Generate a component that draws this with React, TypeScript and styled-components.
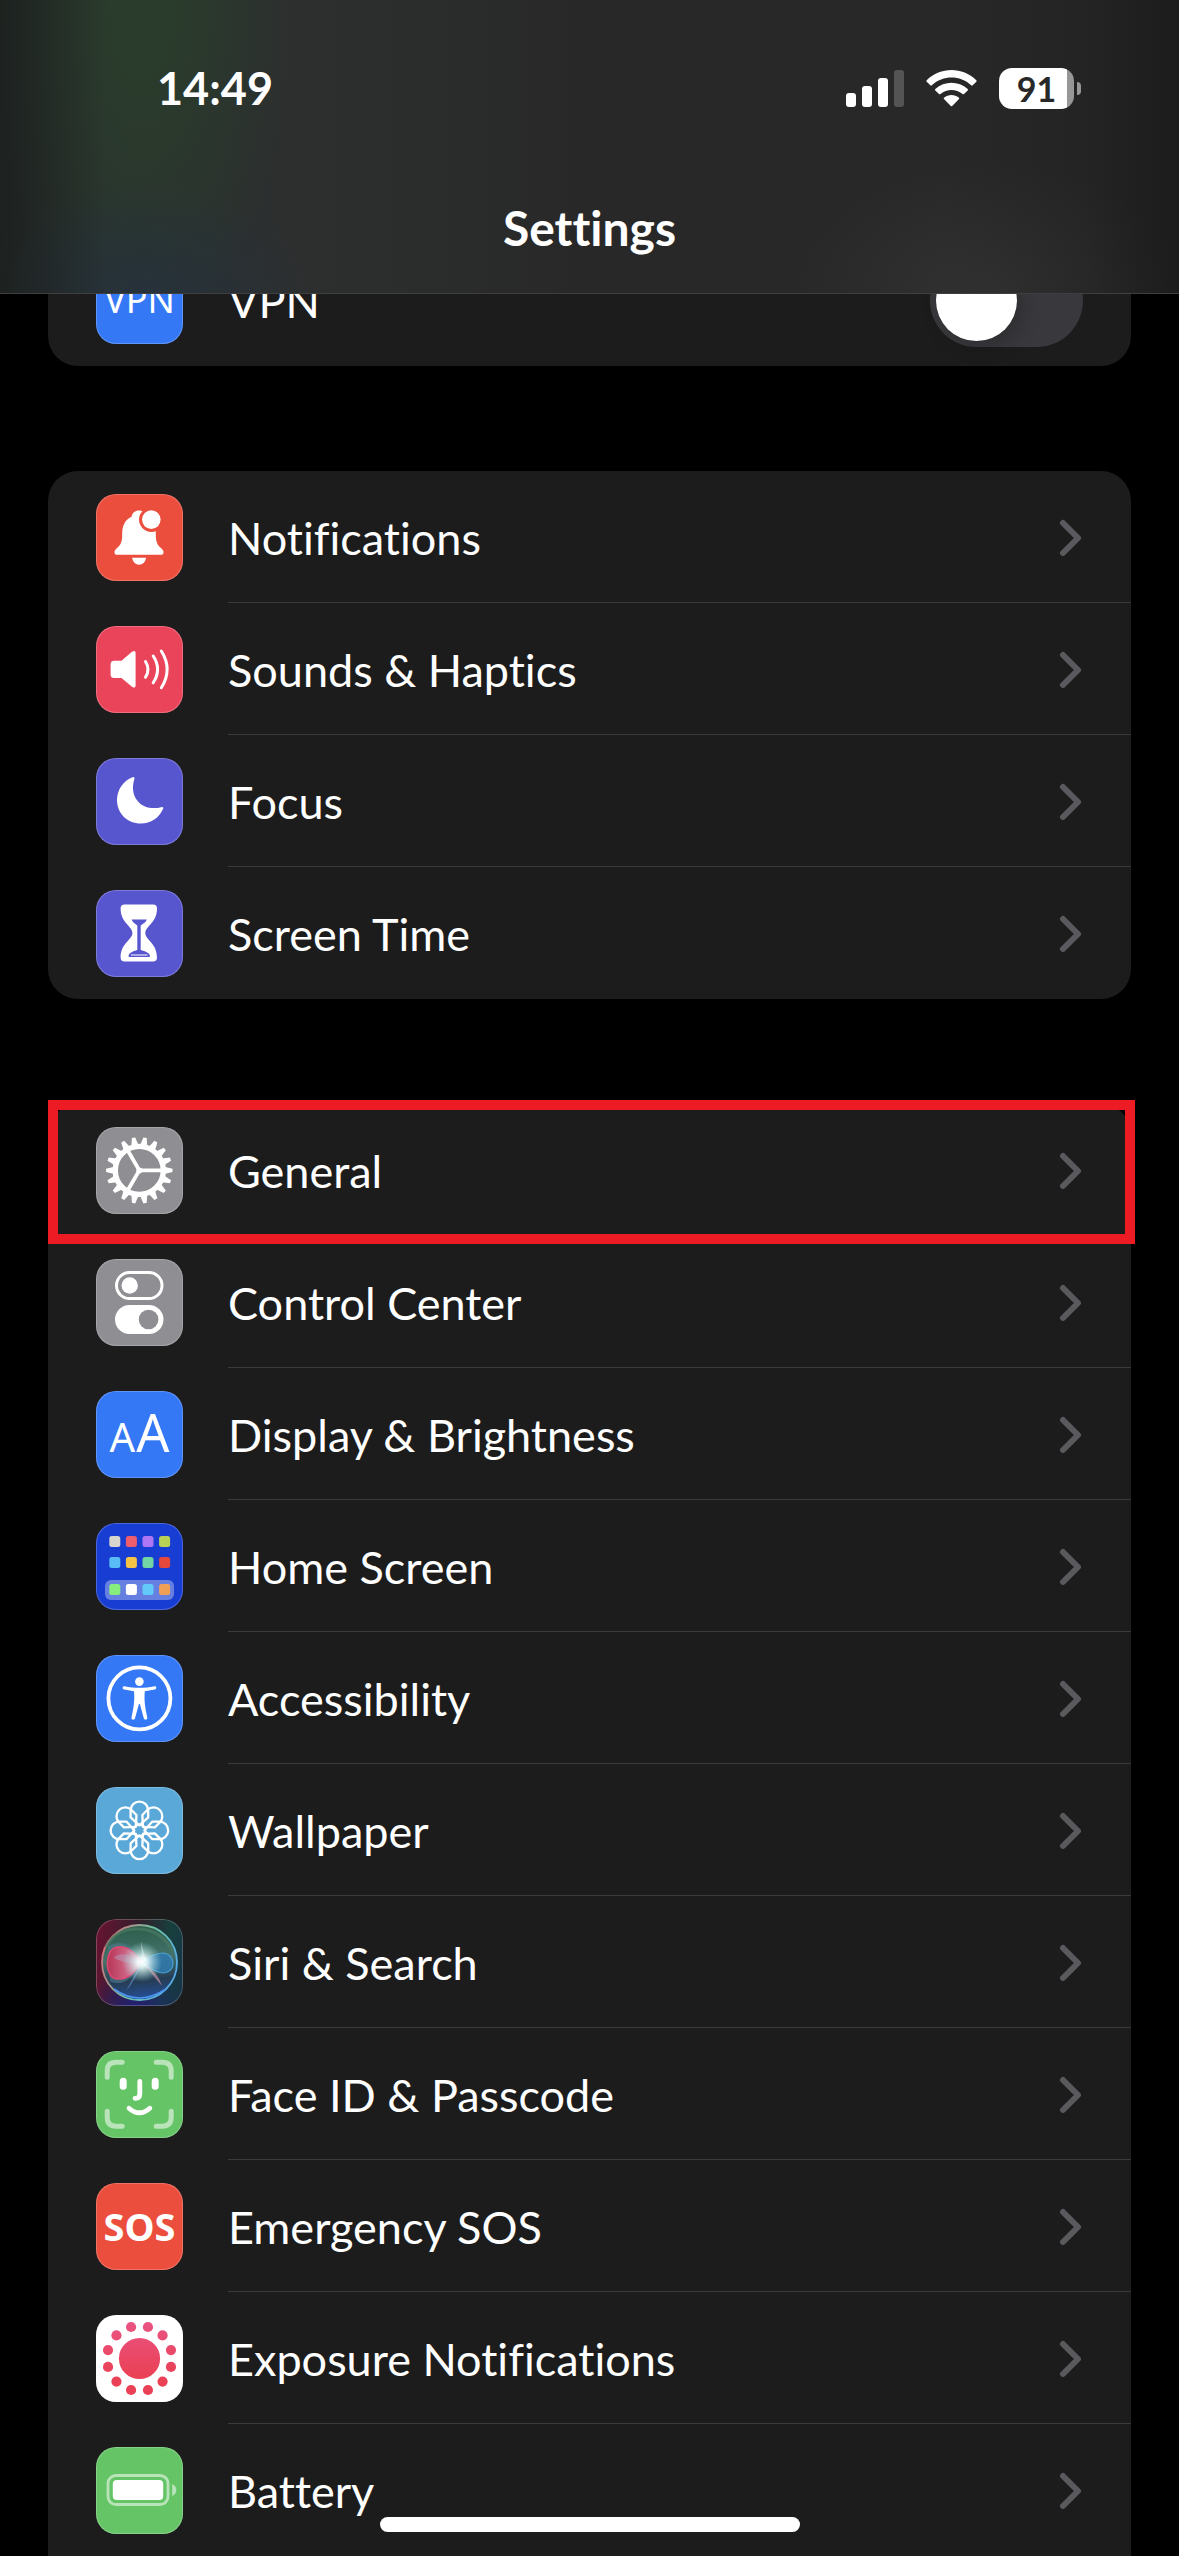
import React from "react";
import styled, { createGlobalStyle } from "styled-components";

const GlobalStyle = createGlobalStyle`
  *, *::before, *::after { box-sizing: border-box; }
  body {
    margin: 0;
    background: #000;
    color: #fff;
    font-family: Lato, "Noto Sans", sans-serif;
    font-size: 45px;
    line-height: 56px;
    font-variant-ligatures: none;
  }
`;

const Screen = styled.div`
  position: relative;
  min-height: 100vh;
  overflow: hidden;
`;

const Header = styled.header`
  position: fixed;
  inset: 0 0 auto;
  z-index: 2;
  height: 294px;
  border-bottom: 1px solid #3f3f40;
  background:
    linear-gradient(90deg, rgba(22, 24, 22, 0.6), rgba(22, 24, 22, 0) 9%),
    linear-gradient(270deg, rgba(20, 20, 20, 0.6), rgba(20, 20, 20, 0.2) 8%, rgba(20, 20, 20, 0) 20%),
    radial-gradient(ellipse 170px 110px at 12% 100%, rgba(37, 49, 62, 0.8), rgba(37, 49, 62, 0)),
    radial-gradient(ellipse 200px 130px at 84% 100%, rgba(52, 52, 52, 0.8), rgba(52, 52, 52, 0)),
    radial-gradient(ellipse 150px 360px at 12% 0%, #2a3c2c 20%, rgba(42, 60, 44, 0)),
    linear-gradient(90deg, #28302e, #2d2f2f 26%, #282828 50%);
`;

const StatusBar = styled.div`
  display: flex;
  align-items: center;
  justify-content: space-between;
  height: 176px;
  padding: 0 97px 0 157px;
`;

const Clock = styled.time`
  font-weight: 700;
`;

const StatusIcons = styled.div`
  display: flex;
  align-items: center;
  gap: 22px;
`;

const BatteryLevel = styled.div`
  position: relative;
  width: 75px;
  height: 41px;
  border-radius: 13px;
  background: linear-gradient(90deg, #fff 68px, #979797 68px);
  color: #282828;
  font-size: 34px;
  font-weight: 700;
  line-height: 42px;
  text-align: center;

  &::after {
    content: "";
    position: absolute;
    left: 78px;
    top: 14px;
    width: 4px;
    height: 13px;
    border-radius: 0 4px 4px 0;
    background: #979797;
  }
`;

const BatterySlot = styled.div`
  width: 83px;
`;

const Title = styled.h1`
  margin: 0;
  padding-top: 22px;
  font-size: 48px;
  font-weight: 700;
  line-height: 60px;
  text-align: center;
`;

const Main = styled.main`
  display: flex;
  flex-direction: column;
  gap: 105px;
  padding: 234px 48px 0;
`;

const Group = styled.ul<{ $open?: boolean }>`
  margin: 0;
  padding: 0;
  list-style: none;
  background: #1c1c1c;
  border-radius: ${(p) => (p.$open ? "30px 30px 0 0" : "30px")};
`;

const Item = styled.li`
  position: relative;
`;

const Highlight = styled.div`
  position: absolute;
  inset: -4px -4px -8px 0;
  z-index: 1;
  border: 10px solid #ed1c24;
  pointer-events: none;
`;

const RowLink = styled.a`
  display: flex;
  align-items: center;
  gap: 45px;
  height: 132px;
  padding-left: 48px;
  color: inherit;
  text-decoration: none;
`;

const Body = styled.span`
  display: flex;
  flex: 1;
  align-items: center;
  justify-content: space-between;
  align-self: stretch;
  padding: 2px 48px 0 0;
  border-bottom: 1px solid #3a3a3c;

  ${Item}:last-child & {
    border-bottom-color: transparent;
  }
`;

const Tile = styled.span<{ $bg: string }>`
  display: flex;
  flex: none;
  align-items: center;
  justify-content: center;
  width: 87px;
  height: 87px;
  overflow: hidden;
  border-radius: 20px;
  background: ${(p) => p.$bg};
  box-shadow: inset 0 0 0 1px rgba(255, 255, 255, 0.22);

  svg { display: block; }
`;

const TileText = styled.span<{ $size: number; $weight: number }>`
  font-family: "Noto Sans", sans-serif;
  font-size: ${(p) => p.$size}px;
  font-weight: ${(p) => p.$weight};
  line-height: 48px;
`;

const LetterPair = styled.span`
  display: flex;
  align-items: baseline;
  gap: 1px;
`;

const Switch = styled.input`
  appearance: none;
  width: 153px;
  height: 93px;
  margin: 0;
  padding: 6px;
  border-radius: 47px;
  background: #39393d;

  &::before {
    content: "";
    display: block;
    width: 81px;
    height: 81px;
    border-radius: 50%;
    background: #fff;
    box-shadow: 6px 6px 20px rgba(0, 0, 0, 0.2);
  }

  &:checked { background: #65c466; }
  &:checked::before { margin-left: 60px; }
`;

const HomeIndicator = styled.div`
  position: fixed;
  bottom: 24px;
  left: 50%;
  z-index: 2;
  width: 420px;
  height: 15px;
  margin-left: -210px;
  border-radius: 8px;
  background: #fff;
`;

const Glyph = ({ children }: { children: React.ReactNode }) => (
  <svg width="87" height="87" viewBox="0 0 87 87" fill="none" aria-hidden="true">
    {children}
  </svg>
);

const Chevron = () => (
  <svg width="24" height="38" viewBox="0 0 24 38" fill="none" aria-hidden="true">
    <path d="M4 4L19 19L4 34" stroke="#5a5a5e" strokeWidth="6" strokeLinecap="round" strokeLinejoin="round" />
  </svg>
);

const BellIcon = () => (
  <Glyph>
    <path fill="#fff" d="M43 16.500C39 16.500 36.200 19 35.600 22.700C29 25.500 26.200 32 26.200 40C26.200 49 24.500 51 20.500 54.500C18.800 56.200 18.500 57 18.500 58.200Q18.500 60.800 21.500 60.800H64.500Q67.500 60.800 67.500 58.200C67.500 57 67.200 56.200 65.500 54.500C61.500 51 59.800 49 59.800 40C59.800 32 57 25.500 50.400 22.700C49.800 19 47 16.500 43 16.500Z" />
    <path fill="#fff" d="M36 63.800H50.200Q48.500 70.800 43.100 70.800T36 63.800Z" />
    <circle cx="55.300" cy="25.600" r="12.300" fill="#eb4e3d" />
    <circle cx="55.300" cy="25.600" r="9.300" fill="#fff" />
  </Glyph>
);

const SpeakerIcon = () => (
  <Glyph>
    <path fill="#fff" d="M18 34.800H25.500L36 25.800Q39.600 23.500 39.600 27V59.500Q39.600 63 36 60.700L25.500 52H18Q14.600 52 14.600 48.500V38.300Q14.600 34.800 18 34.800Z" />
    <path stroke="#fff" strokeWidth="3" strokeLinecap="round" d="M49.500 35.500Q54.500 43.400 49.500 51.300M57.200 30Q66 43.400 57.200 56.800M65.300 25Q77 43.400 65.300 61.800" />
  </Glyph>
);

const MoonIcon = () => (
  <Glyph>
    <path fill="#fff" d="M38.500 20.800C36 28 36 38 43 44.500C49 50.500 58 51.200 66 48.900Q67.900 48.800 67.200 50.500C63.500 60 54.500 65.500 45 65.500C31 65.500 21 55 21 42C21 31.500 27.500 22.500 36.500 19.200Q38.900 18.700 38.500 20.800Z" />
  </Glyph>
);

const HourglassIcon = () => (
  <Glyph>
    <path fill="#fff" d="M28.600 14.500H57Q61 14.500 61 18.500C61 33 49.300 36 49.300 43C49.300 50 61 53 61 67.600Q61 71.600 57 71.600H28.600Q24.600 71.600 24.600 67.600C24.600 53 36.400 50 36.400 43C36.400 36 24.600 33 24.600 18.500Q24.600 14.500 28.600 14.500Z" />
    <path fill="#5856ce" d="M35.600 29.600H50.800Q50 32.500 44.700 35.400V60Q54 62.500 54 66Q54 67 53 67H33.500Q32.500 67 32.500 66Q32.500 62.500 41.300 60V35.400Q36.500 32.500 35.600 29.600Z" />
    <path stroke="#fff" strokeWidth="1" d="M35 65H51.500" />
  </Glyph>
);

const GearIcon = () => (
  <Glyph>
    <g transform="translate(43.300 43.400)">
      {Array.from({ length: 18 }, (_, i) => (
        <path key={i} fill="#fff" d="M25 -3.600L33.200 -1.700V1.700L25 3.600Z" transform={`rotate(${i * 20})`} />
      ))}
      <circle r="24" stroke="#fff" strokeWidth="5.400" />
      {[0, 120, 240].map((a) => (
        <path key={a} stroke="#fff" strokeWidth="3.800" d="M0 0H23" transform={`rotate(${a})`} />
      ))}
      <circle r="3" fill="#fff" />
    </g>
  </Glyph>
);

const TogglesIcon = () => (
  <Glyph>
    <rect x="20.500" y="13.500" width="45.500" height="26" rx="13" stroke="#fff" strokeWidth="3" />
    <circle cx="33.700" cy="26.500" r="8.200" fill="#fff" />
    <rect x="19" y="46" width="48.500" height="29" rx="14.500" fill="#fff" />
    <circle cx="52.600" cy="60.500" r="9.800" fill="#8e8e93" />
  </Glyph>
);

const appRows = [
  ["#d7d6ce", "#ee5d6c", "#ae76f5", "#b9d155"],
  ["#5abcf6", "#f6c344", "#71d5a5", "#e4483a"],
  ["#87ee7e", "#ffffff", "#62c9f8", "#f0a055"],
];
const appTops = [13, 34, 61];

const HomeIcon = () => (
  <Glyph>
    <rect x="9" y="57" width="69" height="20" rx="6" fill="#6680e2" />
    {appRows.map((row, r) =>
      row.map((fill, c) => (
        <rect key={`${r}${c}`} x={13.3 + c * 16.6} y={appTops[r]} width="11" height="11" rx="2.500" fill={fill} />
      )),
    )}
  </Glyph>
);

const PersonIcon = () => (
  <Glyph>
    <circle cx="43.400" cy="43.400" r="31" stroke="#fff" strokeWidth="3.800" />
    <circle cx="43.400" cy="26.600" r="4.300" fill="#fff" />
    <path fill="#fff" d="M28.500 31.200C38 33.200 49 33.200 58.500 31.200C60.800 31 61 34 58.800 34.500L48.800 36.200C48 45 49 52 51.300 62.500C51.600 65 48.600 65.600 47.800 63.300L44 49.500Q43.400 48 42.800 49.500L39 63.300C38.200 65.600 35.200 65 35.500 62.500C37.800 52 38.800 45 38 36.200L28.200 34.500C26 34 26.200 31 28.500 31.200Z" />
  </Glyph>
);

const FlowerIcon = () => (
  <Glyph>
    <g transform="translate(43.400 43.400)" stroke="#fff" strokeWidth="2.300" strokeLinejoin="round">
      {Array.from({ length: 8 }, (_, i) => (
        <path key={i} d="M0 -5L-8.800 -13V-20A8.800 8.800 0 0 1 8.800 -20V-13Z" transform={`rotate(${i * 45})`} />
      ))}
      <circle r="5.800" />
    </g>
  </Glyph>
);

const SiriIcon = () => (
  <Glyph>
    <defs>
      <radialGradient id="siri-glow">
        <stop offset="0" stopColor="#fff" />
        <stop offset="0.250" stopColor="#f2ffff" stopOpacity="0.900" />
        <stop offset="1" stopColor="#a0dcdc" stopOpacity="0" />
      </radialGradient>
      <linearGradient id="siri-ring" x1="0" y1="0.300" x2="1" y2="0.700">
        <stop offset="0" stopColor="#d86f7c" />
        <stop offset="0.500" stopColor="#6fc0a0" />
        <stop offset="1" stopColor="#55aaf0" />
      </linearGradient>
      <linearGradient id="siri-orb" x1="0.400" y1="0" x2="0.500" y2="1">
        <stop offset="0" stopColor="#2c5c49" />
        <stop offset="0.450" stopColor="#42726a" />
        <stop offset="0.750" stopColor="#263d55" />
        <stop offset="1" stopColor="#244f9a" />
      </linearGradient>
      <linearGradient id="siri-pink" x1="0" y1="0" x2="1" y2="0">
        <stop offset="0" stopColor="#c52e52" />
        <stop offset="1" stopColor="#f08aac" />
      </linearGradient>
    </defs>
    <circle cx="43.500" cy="43.500" r="37.500" fill="url(#siri-orb)" stroke="url(#siri-ring)" strokeWidth="1.800" />
    <path d="M10 28Q20 9 43 10T76 32" stroke="#4a7a64" strokeWidth="3" opacity="0.700" />
    <path d="M12 28C22 20 38 24 46 43C36 62 24 68 14 62Z" fill="#4c8094" opacity="0.550" />
    <path d="M45 43C38 31 29 27 21 28C8 30 8 59 21 60C30 61 39 55 45 43Z" fill="url(#siri-pink)" stroke="#ef4772" strokeWidth="1.500" opacity="0.900" />
    <path d="M45 43Q26 30 18 39Q34 47 45 43Z" fill="#b3a2bd" opacity="0.500" />
    <path d="M46 43Q57 34 68 34C80 36 80 53 68 54Q59 54 46 43Z" fill="#3178aa" stroke="#4aa8dc" strokeWidth="1.200" opacity="0.900" />
    <path d="M46 43L30 72Q40 60 46 43Z" fill="#6b9de0" opacity="0.650" />
    <path d="M46 43L66 67Q62 53 46 43Z" fill="#c690a5" opacity="0.700" />
    <path d="M46 43L45 22L50 42Z" fill="#fff" opacity="0.400" />
    <circle cx="46" cy="43" r="20" fill="url(#siri-glow)" />
    <path d="M18 70Q43 88 70 70" stroke="#4c95ee" strokeWidth="1.600" />
  </Glyph>
);

const FaceIcon = () => (
  <Glyph>
    <g strokeLinecap="round" stroke="#fff">
      <path strokeWidth="5" opacity="0.550" d="M11.200 26.200V20Q11.200 11.200 20 11.200H26.200M60.200 11.200H66.300Q75.200 11.200 75.200 20V26.200M75.200 60.200V66.300Q75.200 75.200 66.300 75.200H60.200M26.200 75.200H20Q11.200 75.200 11.200 66.300V60.200" />
      <path strokeWidth="7" d="M27.200 30.300V35.200M59.200 30.300V35.200" />
      <path strokeWidth="4.800" d="M43.800 30.300V43Q43.800 47.300 39.500 47.300H39" />
      <path strokeWidth="4.800" d="M33 57.200Q43.400 66.500 53.800 57.200" />
    </g>
  </Glyph>
);

const ExposureIcon = () => (
  <Glyph>
    <defs>
      <linearGradient id="exposure" gradientUnits="userSpaceOnUse" x1="0" y1="8" x2="0" y2="60">
        <stop offset="0" stopColor="#ea5482" />
        <stop offset="1" stopColor="#ea4156" />
      </linearGradient>
    </defs>
    <g fill="url(#exposure)">
      <circle cx="43.500" cy="43.500" r="20.600" />
      {Array.from({ length: 12 }, (_, i) => {
        const a = ((15 + i * 30) * Math.PI) / 180;
        return <circle key={i} cx={43.5 + 32.6 * Math.cos(a)} cy={43.5 + 32.6 * Math.sin(a)} r="5.100" />;
      })}
    </g>
  </Glyph>
);

const BatteryIcon = () => (
  <Glyph>
    <rect x="12" y="28.500" width="60" height="29" rx="8" stroke="#fff" strokeWidth="2.800" opacity="0.550" />
    <rect x="16.800" y="33" width="50.400" height="20" rx="4" fill="#fff" />
    <path d="M76.200 37Q80.300 39 80.300 43T76.200 49Z" fill="#fff" opacity="0.550" />
  </Glyph>
);

const DisplayIcon = () => (
  <LetterPair>
    <TileText $size={40} $weight={400}>A</TileText>
    <TileText $size={52} $weight={400}>A</TileText>
  </LetterPair>
);

interface Entry {
  label: string;
  bg: string;
  icon: React.ReactNode;
  highlighted?: boolean;
}

const alerts: Entry[] = [
  { label: "Notifications", bg: "#eb4e3d", icon: <BellIcon /> },
  { label: "Sounds & Haptics", bg: "#ea445a", icon: <SpeakerIcon /> },
  { label: "Focus", bg: "#5856ce", icon: <MoonIcon /> },
  { label: "Screen Time", bg: "#5856ce", icon: <HourglassIcon /> },
];

const siriBackground =
  "radial-gradient(circle at 45% 105%, #221f78, transparent 45%), linear-gradient(100deg, #6b1230, #30202c 45%, #17403d 75%, #183147)";

const device: Entry[] = [
  { label: "General", bg: "#8e8e93", icon: <GearIcon />, highlighted: true },
  { label: "Control Center", bg: "#8e8e93", icon: <TogglesIcon /> },
  { label: "Display & Brightness", bg: "#3478f6", icon: <DisplayIcon /> },
  { label: "Home Screen", bg: "#183dd3", icon: <HomeIcon /> },
  { label: "Accessibility", bg: "#3478f6", icon: <PersonIcon /> },
  { label: "Wallpaper", bg: "#59a8d8", icon: <FlowerIcon /> },
  { label: "Siri & Search", bg: siriBackground, icon: <SiriIcon /> },
  { label: "Face ID & Passcode", bg: "#65c466", icon: <FaceIcon /> },
  { label: "Emergency SOS", bg: "#eb4e3d", icon: <TileText $size={38} $weight={700}>SOS</TileText> },
  { label: "Exposure Notifications", bg: "#ffffff", icon: <ExposureIcon /> },
  { label: "Battery", bg: "#65c466", icon: <BatteryIcon /> },
];

const Rows = ({ entries }: { entries: Entry[] }) => (
  <>
    {entries.map((entry) => (
      <Item key={entry.label}>
        <RowLink href="#">
          <Tile $bg={entry.bg} aria-hidden="true">{entry.icon}</Tile>
          <Body>
            {entry.label}
            <Chevron />
          </Body>
        </RowLink>
        {entry.highlighted && <Highlight />}
      </Item>
    ))}
  </>
);

export default function App() {
  return (
    <Screen>
      <GlobalStyle />
      <Header>
        <StatusBar>
          <Clock>14:49</Clock>
          <StatusIcons>
            <svg width="58" height="38" viewBox="0 0 58 38" aria-label="Signal" role="img">
              <rect x="0" y="24" width="10" height="14" rx="3" fill="#fff" />
              <rect x="16" y="17" width="10" height="21" rx="3" fill="#fff" />
              <rect x="32" y="9" width="10" height="29" rx="3" fill="#fff" />
              <rect x="48" y="1" width="10" height="37" rx="3" fill="#545454" />
            </svg>
            <svg width="51" height="38" viewBox="0 0 51 38" aria-label="Wi-Fi" role="img" fill="#fff">
              <path d="M.7 11.200C14.500 -2.400 36.500 -2.400 50.300 11.200Q51 12 50.300 12.700L46.700 16.300Q46 17 45.200 16.300C34 6 17 6 5.800 16.300Q5 17 4.300 16.300L.7 12.700Q0 12 .7 11.200Z" />
              <path d="M9.300 20C18.500 11.500 32.500 11.500 41.700 20Q42.400 20.700 41.700 21.400L38 25Q37.300 25.700 36.500 25C30 19.500 21 19.500 14.500 25Q13.700 25.700 13 25L9.300 21.400Q8.600 20.700 9.300 20Z" />
              <path d="M18 28.700C22.500 25.200 28.500 25.200 33 28.700Q33.700 29.400 33 30.100L26.200 37Q25.500 37.700 24.800 37L18 30.100Q17.300 29.400 18 28.700Z" />
            </svg>
            <BatterySlot>
              <BatteryLevel>91</BatteryLevel>
            </BatterySlot>
          </StatusIcons>
        </StatusBar>
        <Title>Settings</Title>
      </Header>
      <Main>
        <Group>
          <Item>
            <RowLink as="label">
              <Tile $bg="#3478f6" aria-hidden="true">
                <TileText $size={36} $weight={400}>VPN</TileText>
              </Tile>
              <Body>
                VPN
                <Switch type="checkbox" role="switch" />
              </Body>
            </RowLink>
          </Item>
        </Group>
        <Group>
          <Rows entries={alerts} />
        </Group>
        <Group $open>
          <Rows entries={device} />
        </Group>
      </Main>
      <HomeIndicator />
    </Screen>
  );
}
